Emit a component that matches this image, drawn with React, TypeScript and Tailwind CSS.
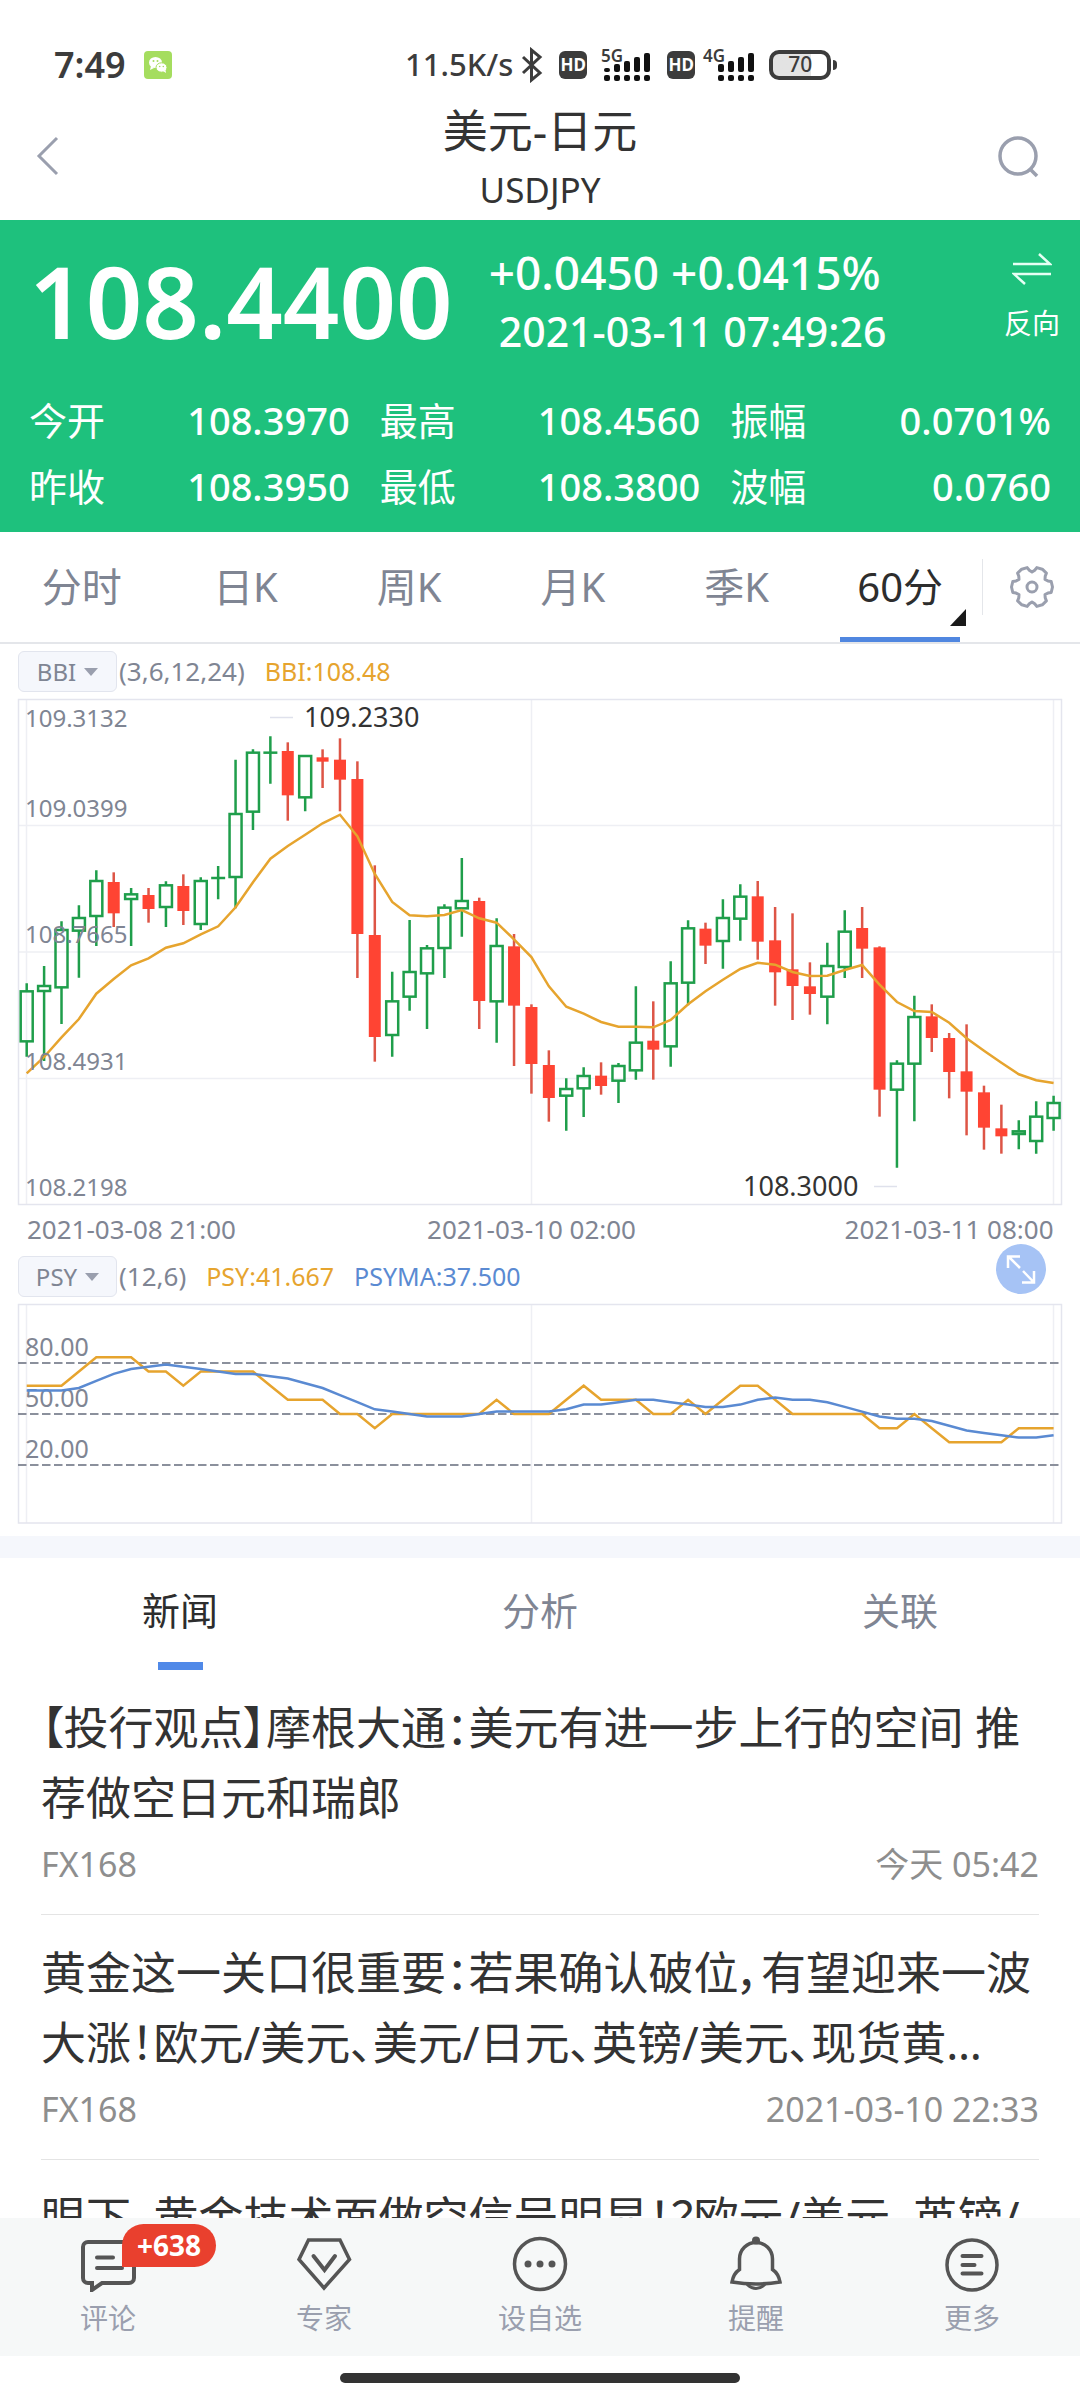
import { useState } from 'react';
import type { ReactNode } from 'react';

type Candle = [dir: 'u' | 'd', high: number, top: number, bottom: number, low: number];

// y values are in thirds of a chart pixel, counted down from the top edge
const candles: Candle[] = [
  ['u', 880, 904, 1054, 1100], ['u', 828, 888, 903, 1113], ['u', 694, 720, 892, 1002],
  ['u', 646, 684, 722, 863], ['u', 541, 573, 678, 768], ['d', 547, 576, 670, 711],
  ['u', 594, 613, 627, 768], ['d', 594, 615, 657, 698], ['u', 574, 586, 651, 711],
  ['d', 553, 588, 663, 705], ['u', 562, 573, 702, 720], ['u', 528, 564, 564, 628],
  ['u', 209, 372, 561, 655], ['u', 178, 188, 365, 420], ['u', 139, 188, 188, 281],
  ['d', 157, 183, 316, 392], ['u', 196, 198, 322, 364], ['d', 178, 202, 215, 294],
  ['d', 145, 209, 269, 364], ['d', 214, 267, 732, 864], ['d', 526, 735, 1041, 1115],
  ['u', 845, 934, 1035, 1100], ['u', 690, 846, 920, 962], ['u', 765, 775, 850, 1017],
  ['u', 643, 653, 774, 864], ['u', 504, 633, 655, 740], ['d', 623, 633, 933, 1017],
  ['u', 685, 768, 934, 1058], ['d', 732, 769, 947, 1128], ['d', 943, 951, 1122, 1211],
  ['d', 1081, 1125, 1224, 1295], ['u', 1165, 1197, 1217, 1322], ['u', 1132, 1158, 1195, 1281],
  ['d', 1117, 1157, 1188, 1214], ['u', 1119, 1128, 1172, 1239], ['u', 889, 1058, 1141, 1169],
  ['d', 934, 1052, 1079, 1169], ['u', 814, 880, 1069, 1130], ['u', 691, 715, 878, 946],
  ['d', 698, 716, 767, 822], ['u', 628, 684, 753, 836], ['u', 583, 620, 686, 752],
  ['d', 573, 619, 755, 809], ['d', 651, 751, 847, 947], ['d', 670, 838, 888, 990],
  ['d', 817, 889, 912, 974], ['u', 758, 828, 920, 1003], ['u', 661, 725, 831, 864],
  ['d', 651, 714, 776, 864], ['d', 769, 772, 1199, 1280], ['u', 1111, 1121, 1199, 1433],
  ['u', 917, 981, 1121, 1294], ['d', 943, 979, 1044, 1086], ['d', 1029, 1044, 1146, 1225],
  ['d', 1003, 1144, 1205, 1336], ['d', 1187, 1207, 1313, 1379], ['d', 1244, 1315, 1339, 1391],
  ['u', 1291, 1324, 1332, 1378], ['u', 1234, 1280, 1353, 1391], ['u', 1217, 1239, 1284, 1322],
];

const bbi = [
  1150, 1101, 1042, 987, 911, 867, 826, 805, 773, 760, 733, 709, 652, 577, 506, 468, 434, 400, 374, 439,
  552, 636, 676, 679, 675, 660, 685, 698, 748, 801, 889, 950, 971, 996, 1010, 1010, 1012, 990, 943, 904,
  869, 837, 818, 824, 846, 858, 857, 840, 825, 884, 936, 963, 966, 998, 1045, 1082, 1118, 1153, 1171, 1179,
];

// rising bars out of the last 12, the first five only feed the average
const psyLead = [8, 8, 8, 7, 7];
const psyCount = [
  8, 8, 8, 9, 10, 10, 10, 9, 9, 8, 9, 9, 9, 9, 8, 7, 7, 7, 6, 6,
  5, 6, 6, 6, 6, 6, 6, 7, 6, 6, 6, 7, 8, 7, 7, 7, 6, 6, 7, 6,
  7, 8, 8, 7, 6, 6, 6, 6, 6, 5, 5, 6, 5, 4, 4, 4, 4, 5, 5, 5,
];

const priceLabels = [
  { y: 29, text: '109.3132' },
  { y: 119, text: '109.0399' },
  { y: 245, text: '108.7665' },
  { y: 372, text: '108.4931' },
  { y: 498, text: '108.2198' },
];

const stats = [
  { label: '今开', value: '108.3970' },
  { label: '最高', value: '108.4560' },
  { label: '振幅', value: '0.0701%' },
  { label: '昨收', value: '108.3950' },
  { label: '最低', value: '108.3800' },
  { label: '波幅', value: '0.0760' },
];

const periods = ['分时', '日K', '周K', '月K', '季K', '60分'];
const sections = ['新闻', '分析', '关联'];

const news = [
  { title: '【投行观点】摩根大通：美元有进一步上行的空间 推荐做空日元和瑞郎', source: 'FX168', time: '今天 05:42' },
  { title: '黄金这一关口很重要：若果确认破位，有望迎来一波大涨！欧元/美元、美元/日元、英镑/美元、现货黄…', source: 'FX168', time: '2021-03-10 22:33' },
  { title: '眼下，黄金技术面做空信号明显！？欧元/美元、英镑/' },
];

const xAt = (i: number) => 26.7 + 17.405 * i;
const yAt = (v: number) => v / 3 - 8;
const psyY = (v: number) => 111 + (50 - v) * 1.7;

const toPoints = (values: number[], y: (v: number) => number) =>
  values.map((v, i) => `${xAt(i).toFixed(1)},${y(v).toFixed(1)}`).join(' ');

function HdBadge() {
  return (
    <span className="flex h-7 w-7 items-center justify-center rounded-md bg-[#3c3c3c] text-[17px] leading-none font-bold text-white">
      HD
    </span>
  );
}

function Signal({ label, tops }: { label: string; tops: number[] }) {
  return (
    <svg width={tops.length * 10 + 8} height="36" className="overflow-visible">
      <text x="0" y="15" fontSize="17" fontWeight="600" fill="#3c3c3c">{label}</text>
      {tops.map((top, i) => (
        <g key={i} fill="#111111">
          <rect x={(tops.length === 5 ? 3 : 15) + i * 10} y={top} width="6" height={25 - top} rx="2" />
          <rect x={(tops.length === 5 ? 3 : 15) + i * 10} y="28" width="6" height="6" rx="2" />
        </g>
      ))}
    </svg>
  );
}

function StatusBar() {
  return (
    <div className="flex h-[92px] shrink-0 items-center pt-[37px] font-semibold text-[#3c3c3c]">
      <div className="flex w-3/8 items-center gap-[18px] pl-[54px]">
        <span className="text-[36px] leading-none">7:49</span>
        <svg width="28" height="28" viewBox="0 0 28 28">
          <rect width="28" height="28" rx="4" fill="#a5dd5f" />
          <ellipse cx="11.5" cy="11.5" rx="6.5" ry="5.5" fill="#fff" />
          <path d="M7 15l-1 4 4-2z" fill="#fff" />
          <ellipse cx="17.5" cy="16.5" rx="5.5" ry="4.7" fill="#fff" stroke="#a5dd5f" />
          <path d="M19 20l3 2-.5-3z" fill="#fff" />
          <g fill="#a5dd5f">
            <circle cx="9.5" cy="10" r="1" />
            <circle cx="13.5" cy="10" r="1" />
            <circle cx="15.7" cy="15.5" r=".8" />
            <circle cx="19.3" cy="15.5" r=".8" />
          </g>
        </svg>
      </div>
      <div className="flex items-center">
        <span className="text-[31px] leading-none font-medium">11.5K/s</span>
        <svg width="22" height="36" viewBox="0 0 22 36" fill="none" stroke="#3c3c3c" strokeWidth="3" className="ml-2">
          <path d="M2 10l17 16-8.500 7V3L19 10 2 26" />
        </svg>
        <div className="ml-4 flex items-center gap-[14px]">
          <HdBadge />
          <Signal label="5G" tops={[21, 17, 14, 10, 6]} />
        </div>
        <div className="ml-2 flex items-center gap-2">
          <HdBadge />
          <Signal label="4G" tops={[17, 14, 10, 6]} />
        </div>
        <div className="ml-[18px] flex items-center gap-0.5">
          <span className="flex h-[30px] w-[62px] items-center justify-center rounded-[10px] border-4 border-[#3c3c3c] bg-linear-to-r from-[#e3e3e3] from-70% to-white to-70% text-[21px] leading-none font-medium">
            70
          </span>
          <span className="h-2.5 w-1 rounded-r bg-[#3c3c3c]" />
        </div>
      </div>
    </div>
  );
}

function TitleBar() {
  return (
    <header className="flex h-[128px] shrink-0 items-center justify-between text-[#333333]">
      <button aria-label="返回" className="w-[120px] pl-[36px]">
        <svg width="24" height="42" viewBox="0 0 24 42" fill="none" stroke="#9a9fae" strokeWidth="3">
          <path d="M21 3L3 21l18 18" />
        </svg>
      </button>
      <div className="pt-2 text-center">
        <h1 className="text-[45px] leading-[60px]">美元-日元</h1>
        <p className="text-[35px] leading-[58px]">USDJPY</p>
      </div>
      <button aria-label="搜索" className="flex w-[120px] justify-end pr-[40px]">
        <svg width="44" height="44" viewBox="0 0 44 44" fill="none" stroke="#9a9fae" strokeWidth="3.500">
          <circle cx="22" cy="22" r="18" />
          <path d="M34 35l7 7" />
        </svg>
      </button>
    </header>
  );
}

function Quote() {
  return (
    <section className="shrink-0 bg-[#1ec17d] pt-[22px] pb-[13px] text-white">
      <div className="flex items-center pr-5 pb-[27px] pl-[29px]">
        <div className="text-[99px] leading-[118px] font-semibold">108.4400</div>
        <div className="ml-9 font-medium">
          <div className="text-[46px] leading-[60px]">+0.0450 +0.0415%</div>
          <div className="pl-2.5 text-[41px] leading-[58px]">2021-03-11 07:49:26</div>
        </div>
        <button className="ml-auto flex flex-col items-center gap-5 pb-2">
          <svg width="40" height="32" viewBox="0 0 40 32" fill="none" stroke="#e6fff4" strokeWidth="2.500">
            <path d="M1 11h37L27 1M39 21H2l11 10" />
          </svg>
          <span className="text-[28px] leading-9">反向</span>
        </button>
      </div>
      <dl className="grid grid-cols-3 gap-x-[30px] px-[29px] text-[38px] leading-[66px]">
        {stats.map(s => (
          <div key={s.label} className="flex justify-between">
            <dt>{s.label}</dt>
            <dd className="font-medium">{s.value}</dd>
          </div>
        ))}
      </dl>
    </section>
  );
}

function Gear() {
  const points: string[] = [];
  for (let tooth = 0; tooth < 6; tooth++) {
    [[-21, 17], [-16, 20], [0, 20.5], [16, 20], [21, 17], [30, 15]].forEach(([deg, r]) => {
      const a = ((tooth * 60 + deg) * Math.PI) / 180;
      points.push(`${(22 + r * Math.cos(a)).toFixed(1)},${(22 + r * Math.sin(a)).toFixed(1)}`);
    });
  }
  return (
    <svg width="44" height="44" viewBox="0 0 44 44" fill="none" stroke="#9a9fae" strokeWidth="3" strokeLinejoin="round">
      <polygon points={points.join(' ')} />
      <circle cx="22" cy="22" r="5" />
    </svg>
  );
}

function PeriodTabs() {
  const [active, setActive] = useState('60分');
  return (
    <nav className="flex h-[112px] shrink-0 items-center border-b-2 border-[#e4e6ea]">
      <div className="flex h-full flex-1">
        {periods.map(p => (
          <button
            key={p}
            onClick={() => setActive(p)}
            className={`relative flex-1 text-[40px] ${active === p ? 'text-[#2d2d2d]' : 'text-[#7f8593]'}`}
          >
            {p}
            {active === p && <span className="absolute inset-x-[22px] bottom-0 h-[5px] bg-[#5087e0]" />}
            {p === '60分' && (
              <svg width="16" height="17" className="absolute right-4 bottom-4">
                <path d="M16 0v17H0z" fill="#1a1a1a" />
              </svg>
            )}
          </button>
        ))}
      </div>
      <span className="h-14 w-px bg-[#e4e6ea]" />
      <button aria-label="设置" className="flex w-[97px] justify-center">
        <Gear />
      </button>
    </nav>
  );
}

function IndicatorButton({ name }: { name: string }) {
  return (
    <button className="flex h-[41px] w-[99px] items-center justify-center gap-2 rounded-md border border-[#e2e5ee] bg-[#f5f7fc] text-[24px]">
      {name}
      <svg width="14" height="8">
        <path d="M0 0h14L7 8z" fill="#9a9fae" />
      </svg>
    </button>
  );
}

function PriceChart() {
  return (
    <svg viewBox="0 0 1080 558" className="w-full shrink-0">
      <g stroke="#eeeff4" strokeWidth="1.500">
        <path d="M18 127.500H1061M18 254H1061M18 380.500H1061M26.500 1V506M531.500 1V506M1053.500 1V506" />
      </g>
      <rect x="18.500" y="1.500" width="1043" height="505" fill="none" stroke="#e4e5ee" strokeWidth="1.500" />
      <path d="M270 19.500h23M874 488.500h23" stroke="#dfe1ec" strokeWidth="1.500" />
      {candles.map(([dir, high, top, bottom, low], i) => {
        const x = xAt(i);
        if (dir === 'd') {
          return (
            <g key={i} fill="#ff4433">
              <rect x={x - 1.25} y={yAt(high)} width="2.5" height={(low - high) / 3} fill="#dd5546" />
              <rect x={x - 6} y={yAt(top)} width="12" height={(bottom - top) / 3} />
            </g>
          );
        }
        return (
          <g key={i} fill="none" stroke="#1f9e4b" strokeWidth="2.500">
            <path d={`M${x} ${yAt(high)}V${yAt(top)}M${x} ${yAt(bottom)}V${yAt(low)}`} />
            {top === bottom ? (
              <path d={`M${x - 7} ${yAt(top)}h14`} />
            ) : (
              <rect x={x - 6} y={yAt(top)} width="12" height={(bottom - top) / 3} />
            )}
          </g>
        );
      })}
      <polyline points={toPoints(bbi, yAt)} fill="none" stroke="#e6a42e" strokeWidth="2.500" />
      <g fontSize="24" fill="#7f8593">
        {priceLabels.map(l => (
          <text key={l.text} x="25" y={l.y}>{l.text}</text>
        ))}
      </g>
      <g fontSize="27" fill="#333333">
        <text x="304" y="29">109.2330</text>
        <text x="743" y="498">108.3000</text>
      </g>
      <g fontSize="26" fill="#7f8593">
        <text x="27" y="541">2021-03-08 21:00</text>
        <text x="531.500" y="541" textAnchor="middle">2021-03-10 02:00</text>
        <text x="1053.500" y="541" textAnchor="end">2021-03-11 08:00</text>
      </g>
    </svg>
  );
}

function PsyChart() {
  const psy = psyCount.map(n => (n / 12) * 100);
  const all = [...psyLead, ...psyCount];
  const psyMa = psyCount.map((_, i) => (all.slice(i, i + 6).reduce((a, b) => a + b, 0) / 72) * 100);

  return (
    <svg viewBox="0 0 1080 221" className="w-full shrink-0">
      <path d="M26.500 2V220M531.500 2V220M1053.500 2V220" stroke="#eeeff4" strokeWidth="1.500" />
      <rect x="18.500" y="1.500" width="1043" height="218.500" fill="none" stroke="#e4e5ee" strokeWidth="1.500" />
      <path d="M18 60H1059M18 111H1059M18 162H1059" stroke="#8b909c" strokeWidth="2" strokeDasharray="8.500 3.500" />
      <g fontSize="25" fill="#7f8593">
        <text x="25" y="53">80.00</text>
        <text x="25" y="104">50.00</text>
        <text x="25" y="155">20.00</text>
      </g>
      <g fill="none" strokeWidth="2.500">
        <polyline points={toPoints(psy, psyY)} stroke="#e6a42e" />
        <polyline points={toPoints(psyMa, psyY)} stroke="#5a8ad2" />
      </g>
    </svg>
  );
}

function Charts() {
  return (
    <section className="flex shrink-0 flex-col text-[25px] text-[#7f8593]">
      <div className="flex items-center px-[18px] pt-[7px] pb-1.5">
        <IndicatorButton name="BBI" />
        <span className="pl-0.5 text-[26px]">(3,6,12,24)</span>
        <span className="pl-5 text-[#e6a42e]">BBI:108.48</span>
      </div>
      <PriceChart />
      <div className="relative flex items-center px-[18px] pb-1.5">
        <IndicatorButton name="PSY" />
        <span className="pl-0.5 text-[26px]">(12,6)</span>
        <span className="pl-5 text-[#e6a42e]">PSY:41.667</span>
        <span className="pl-5 text-[#5a8ad2]">PSYMA:37.500</span>
        <button aria-label="全屏" className="absolute -top-3 right-[34px] rounded-full bg-[#a6c3f5]">
          <svg width="50" height="50" viewBox="0 0 50 50" fill="none" stroke="#fff" strokeWidth="2.500">
            <path d="M12 24V12.500h12M12.500 12.500L24 24M38 27v11.500H26M38 38.500L27 27" />
          </svg>
        </button>
      </div>
      <PsyChart />
    </section>
  );
}

function News() {
  const [active, setActive] = useState('新闻');
  return (
    <section className="flex min-h-0 flex-1 flex-col overflow-hidden">
      <div className="flex h-[112px] shrink-0">
        {sections.map(s => (
          <button
            key={s}
            onClick={() => setActive(s)}
            className={`flex flex-1 flex-col items-center justify-between pt-7 text-[38px] leading-[48px] ${active === s ? 'text-[#2d2d2d]' : 'text-[#7f8593]'}`}
          >
            {s}
            {active === s && <span className="h-2 w-[45px] bg-[#5089e8]" />}
          </button>
        ))}
      </div>
      <div className="px-[41px]">
        {news.map(n => (
          <a key={n.title} href="#" className="block border-b border-[#e4e4e4] pt-[23px] pb-[26px]">
            <h2 className="text-[45px] leading-[70px] text-[#333333] [font-feature-settings:'palt']">{n.title}</h2>
            {n.source && (
              <div className="mt-[7px] flex justify-between text-[34px] leading-[48px] text-[#8e8e8e]">
                <span>{n.source}</span>
                <span>{n.time}</span>
              </div>
            )}
          </a>
        ))}
      </div>
    </section>
  );
}

function FooterItem({ label, badge, children }: { label: string; badge?: string; children: ReactNode }) {
  return (
    <button className="flex flex-1 flex-col items-center gap-1.5">
      <span className="relative">
        <svg width="56" height="56" viewBox="0 0 56 56" fill="none" stroke="#555555" strokeWidth="4">
          {children}
        </svg>
        {badge && (
          <span className="absolute -top-3 left-[42px] rounded-full rounded-bl-none bg-[#e9402e] px-[15px] text-[28px] leading-[43px] font-bold text-white">
            {badge}
          </span>
        )}
      </span>
      <span className="text-[28px] leading-10 text-[#9a9fae]">{label}</span>
    </button>
  );
}

function Footer() {
  return (
    <footer className="shrink-0">
      <nav className="flex h-[138px] bg-[#f6f8f8] pt-[18px]">
        <FooterItem label="评论" badge="+638">
          <path d="M22 47h27a5 5 0 0 0 5-5V11a5 5 0 0 0-5-5H8a5 5 0 0 0-5 5v31a5 5 0 0 0 5 5h4v7z" />
          <path d="M17 21.500h16M17 32h25" strokeLinecap="round" />
        </FooterItem>
        <FooterItem label="专家">
          <path d="M12.500 4H44L53.500 23.500 28 52 3 23.500z" strokeWidth="3.500" />
          <path d="M17.500 20L28.500 34 39 20" strokeLinecap="round" />
        </FooterItem>
        <FooterItem label="设自选">
          <circle cx="28" cy="28" r="25.500" strokeWidth="3.500" />
          <g fill="#555555" stroke="none">
            <circle cx="16" cy="28" r="3.500" />
            <circle cx="28" cy="28" r="3.500" />
            <circle cx="40" cy="28" r="3.500" />
          </g>
        </FooterItem>
        <FooterItem label="提醒">
          <circle cx="28" cy="4.500" r="4" fill="#555555" stroke="none" />
          <path d="M11.500 33.500V23a16.500 16.500 0 0 1 33 0v10.500q6 4 7.500 12.500-24 4-48 0 1.500-8.500 7.500-12.500z" strokeWidth="3.500" />
          <path d="M19 48.500q9 8 18 0" strokeWidth="3" />
        </FooterItem>
        <FooterItem label="更多">
          <circle cx="28" cy="29" r="25" strokeWidth="3.500" />
          <path d="M18.500 20h19M18.500 29h12M18.500 37.500h19" strokeLinecap="round" />
        </FooterItem>
      </nav>
      <div className="flex h-11 justify-center bg-white pt-[17px]">
        <span className="h-2.5 w-[400px] rounded-full bg-[#333333]" />
      </div>
    </footer>
  );
}

export default function App() {
  return (
    <div lang="zh-CN" className="flex h-screen flex-col overflow-hidden bg-white font-['Noto_Sans','Noto_Sans_CJK_SC',sans-serif]">
      <StatusBar />
      <TitleBar />
      <Quote />
      <PeriodTabs />
      <Charts />
      <div className="mt-3 h-[22px] shrink-0 bg-[#f5f7fc]" />
      <News />
      <Footer />
    </div>
  );
}
